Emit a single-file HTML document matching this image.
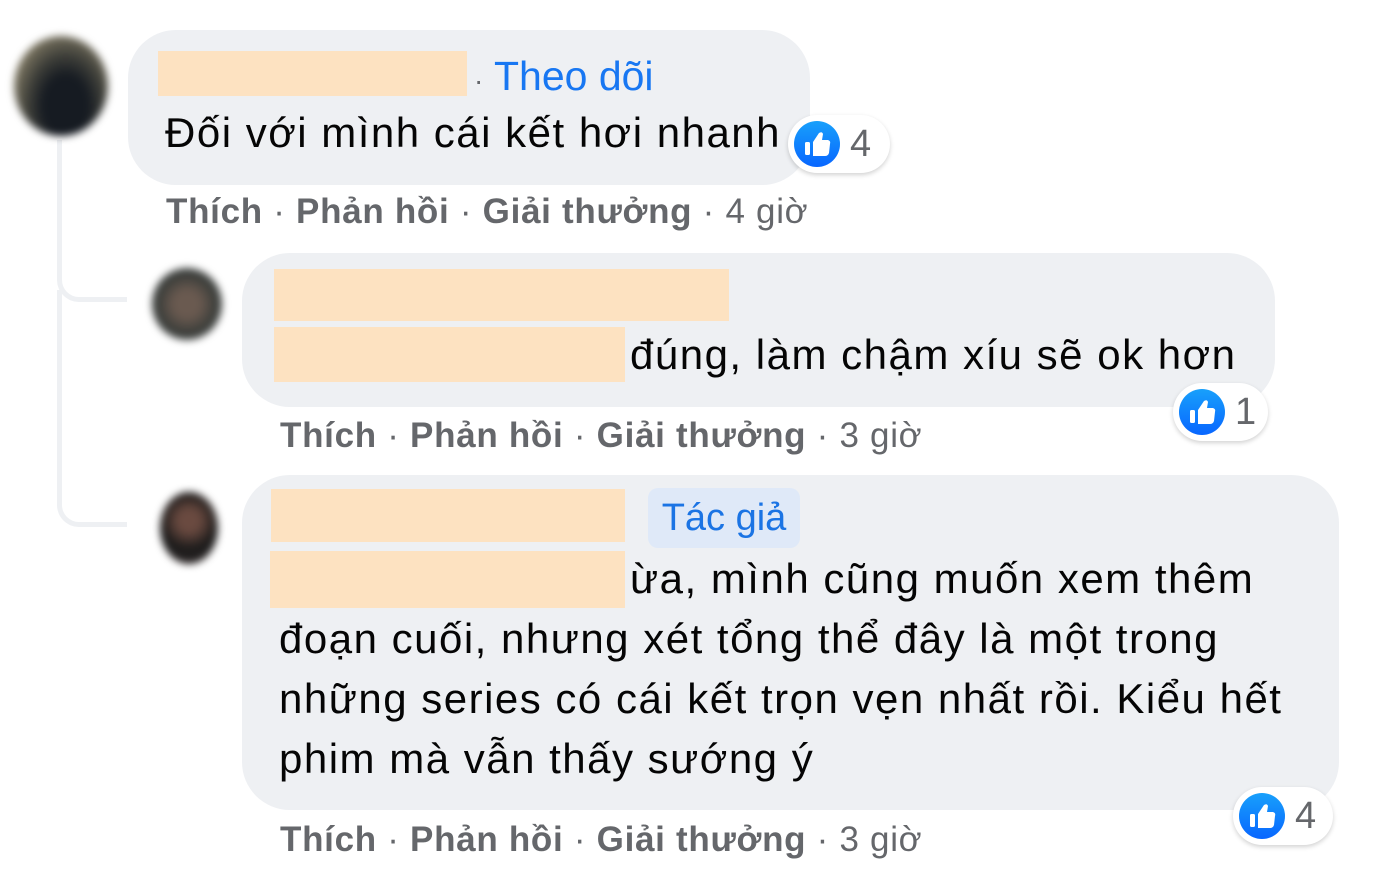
<!DOCTYPE html>
<html><head><meta charset="utf-8">
<style>
*{margin:0;padding:0;box-sizing:border-box}
body{width:1382px;height:872px;background:#fff;position:relative;overflow:hidden;font-family:"Liberation Sans",sans-serif;color:#050505}
.a{position:absolute}
.bub{position:absolute;background:#eef0f3;border-radius:48px}
.blur{position:absolute;background:#fde2c1}
.t{position:absolute;font-size:42px;letter-spacing:1.5px;line-height:60px;white-space:nowrap}
.act{position:absolute;font-size:35px;letter-spacing:0.7px;color:#65676b;white-space:nowrap;line-height:40px}
.act b{font-weight:bold}
.av{position:absolute;border-radius:50%;filter:blur(4px)}
.rx{position:absolute;background:#fff;border-radius:30px;box-shadow:0 2px 5px rgba(0,0,0,.18);height:58px}
.rx .ic{position:absolute;left:6px;top:6px;width:46px;height:46px;border-radius:50%;background:linear-gradient(#18a0fb,#0866ff)}
.rx span{position:absolute;left:62px;top:8px;font-size:38px;color:#65676b}
</style></head><body>
<div class="a" style="left:57px;top:140px;width:70px;height:162px;border-left:5px solid #eef0f3;border-bottom:5px solid #eef0f3;border-bottom-left-radius:22px"></div>
<div class="a" style="left:57px;top:290px;width:70px;height:237px;border-left:5px solid #eef0f3;border-bottom:5px solid #eef0f3;border-bottom-left-radius:22px"></div>

<div class="av" style="left:14px;top:36px;width:94px;height:100px;background:radial-gradient(ellipse at 55% 70%,#161b22 0 30%,#3c3d38 50%,#8a826a 80%,#a09a80 100%)"></div>
<div class="bub" style="left:128px;top:30px;width:682px;height:155px"></div>
<div class="blur" style="left:158px;top:51px;width:309px;height:45px"></div>
<div class="a" style="left:474px;top:52px;font-size:41px;line-height:48px;color:#1877f2;white-space:nowrap"><span style="color:#65676b;font-size:28px">·</span> Theo dõi</div>
<div class="t" style="left:165px;top:103px">Đối với mình cái kết hơi nhanh</div>
<div class="rx" style="left:788px;top:115px;width:102px"><div class="ic"><svg width="46" height="46" viewBox="0 0 46 46"><rect x="11" y="21" width="5" height="13" rx="1.5" fill="#fff"/><path d="M19 21 L25 12 Q28 10 29 13 L28 19 L34 19 Q37 20 36 23 L35 32 Q34 35 31 35 L19 35 Z" fill="#fff"/></svg></div><span>4</span></div>
<div class="act" style="left:166px;top:192px"><b>Thích</b> · <b>Phản hồi</b> · <b>Giải thưởng</b> · 4 giờ</div>

<div class="av" style="left:152px;top:268px;width:70px;height:72px;background:radial-gradient(circle at 50% 50%,#6a5a50 0 25%,#3a3d3a 60%,#55585a 100%)"></div>
<div class="bub" style="left:242px;top:253px;width:1033px;height:154px"></div>
<div class="blur" style="left:274px;top:269px;width:455px;height:52px"></div>
<div class="blur" style="left:274px;top:327px;width:351px;height:55px"></div>
<div class="t" style="left:630px;top:325px">đúng, làm chậm xíu sẽ ok hơn</div>
<div class="rx" style="left:1173px;top:383px;width:95px"><div class="ic"><svg width="46" height="46" viewBox="0 0 46 46"><rect x="11" y="21" width="5" height="13" rx="1.5" fill="#fff"/><path d="M19 21 L25 12 Q28 10 29 13 L28 19 L34 19 Q37 20 36 23 L35 32 Q34 35 31 35 L19 35 Z" fill="#fff"/></svg></div><span>1</span></div>
<div class="act" style="left:280px;top:416px"><b>Thích</b> · <b>Phản hồi</b> · <b>Giải thưởng</b> · 3 giờ</div>

<div class="av" style="left:160px;top:492px;width:58px;height:72px;background:radial-gradient(circle at 50% 40%,#6a4a40 0 20%,#1a1a1a 55%,#3a3030 100%)"></div>
<div class="bub" style="left:242px;top:475px;width:1097px;height:335px"></div>
<div class="blur" style="left:271px;top:489px;width:354px;height:53px"></div>
<div class="a" style="left:648px;top:488px;width:152px;height:60px;background:#dfe9f8;border-radius:10px;color:#1b74e4;font-size:38px;line-height:60px;text-align:center">Tác giả</div>
<div class="blur" style="left:270px;top:551px;width:355px;height:57px"></div>
<div class="t" style="left:630px;top:549px">ừa, mình cũng muốn xem thêm</div>
<div class="t" style="left:279px;top:609px">đoạn cuối, nhưng xét tổng thể đây là một trong</div>
<div class="t" style="left:279px;top:669px">những series có cái kết trọn vẹn nhất rồi. Kiểu hết</div>
<div class="t" style="left:279px;top:729px">phim mà vẫn thấy sướng ý</div>
<div class="rx" style="left:1233px;top:787px;width:100px"><div class="ic"><svg width="46" height="46" viewBox="0 0 46 46"><rect x="11" y="21" width="5" height="13" rx="1.5" fill="#fff"/><path d="M19 21 L25 12 Q28 10 29 13 L28 19 L34 19 Q37 20 36 23 L35 32 Q34 35 31 35 L19 35 Z" fill="#fff"/></svg></div><span>4</span></div>
<div class="act" style="left:280px;top:820px"><b>Thích</b> · <b>Phản hồi</b> · <b>Giải thưởng</b> · 3 giờ</div>
</body></html>
